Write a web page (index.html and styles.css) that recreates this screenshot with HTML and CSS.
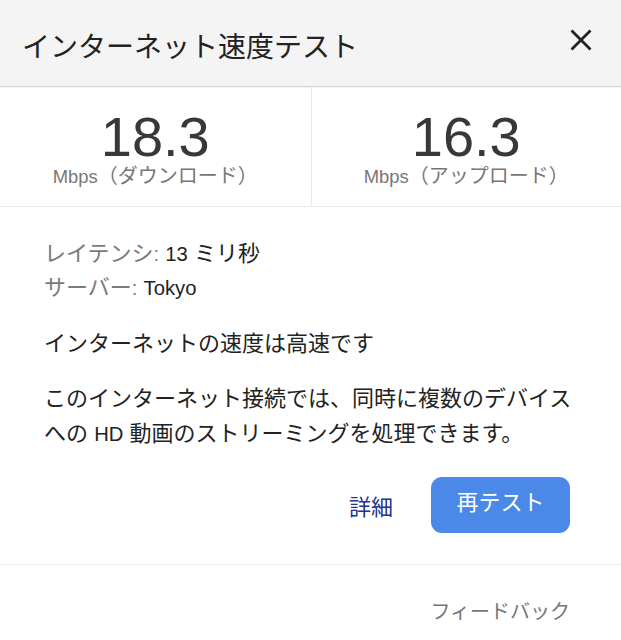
FILE: index.html
```html
<!DOCTYPE html>
<html lang="ja">
<head>
<meta charset="utf-8">
<title>インターネット速度テスト</title>
<link rel="stylesheet" href="styles.css">
</head>
<body>
<div class="card">
  <header class="head">
    <h1 class="title">インターネット速度テスト</h1>
    <button class="close" aria-label="閉じる">
      <svg width="22" height="22" viewBox="0 0 22 22"><path d="M1.5 1.5 L20.5 20.5 M20.5 1.5 L1.5 20.5" stroke="#222" stroke-width="2.8" fill="none"/></svg>
    </button>
  </header>
  <section class="stats">
    <div class="stat">
      <div class="num">18.3</div>
      <div class="unit"><span class="lat">Mbps</span>（ダウンロード）</div>
    </div>
    <div class="stat">
      <div class="num">16.3</div>
      <div class="unit"><span class="lat">Mbps</span>（アップロード）</div>
    </div>
  </section>
  <section class="body">
    <div class="info">
      <div><span class="key">レイテンシ<span class="lat">:</span></span> <span class="lat">13</span> ミリ秒</div>
      <div><span class="key">サーバー<span class="lat">:</span></span> <span class="lat">Tokyo</span></div>
    </div>
    <p class="verdict">インターネットの速度は高速です</p>
    <p class="desc">このインターネット接続では、同時に複数のデバイス<br>への <span class="lat">HD</span> 動画のストリーミングを処理できます。</p>
    <div class="actions">
      <button class="link">詳細</button>
      <button class="primary">再テスト</button>
    </div>
  </section>
  <footer class="foot">
    <span class="feedback">フィードバック</span>
  </footer>
</div>
</body>
</html>
```

FILE: styles.css
```css
html, body {
  margin: 0;
  padding: 0;
  background: #fff;
}
body {
  font-family: "Liberation Sans", "Noto Sans CJK JP", sans-serif;
  color: #222;
}
.lat {
  font-size: 0.92em;
}
.head {
  height: 87px;
  box-sizing: border-box;
  background: #f4f4f4;
  border-bottom: 1px solid #d4d4d4;
  box-shadow: 0 1px 1px rgba(0,0,0,0.04);
  display: flex;
  align-items: center;
  justify-content: space-between;
  padding: 10px 29px 0 22px;
}
.title {
  margin: 0;
  font-size: 28px;
  font-weight: normal;
  line-height: 36px;
  color: #222;
}
.close {
  border: 0;
  background: none;
  padding: 0;
  width: 22px;
  height: 22px;
  margin-top: -16px;
  display: block;
}
.close svg { display: block; }
.stats {
  display: grid;
  grid-template-columns: 1fr 1fr;
  border-bottom: 1px solid #e8e8e8;
  height: 120px;
  box-sizing: border-box;
}
.stat {
  text-align: center;
  padding-top: 22px;
}
.stat + .stat {
  border-left: 1px solid #e8e8e8;
}
.num {
  font-size: 56px;
  line-height: 56px;
  color: #383838;
}
.unit {
  font-size: 20px;
  line-height: 24px;
  color: #777;
  margin-top: -1px;
}
.body {
  padding: 30px 44px 0 44px;
  font-size: 22px;
}
.info {
  line-height: 33px;
}
.key {
  color: #7a7a7a;
}
.verdict {
  margin: 22px 0 0 0;
  line-height: 33px;
}
.desc {
  margin: 21px 0 0 0;
  line-height: 35px;
}
.actions {
  display: flex;
  justify-content: flex-end;
  align-items: center;
  gap: 38px;
  margin: 25px -44px 0 -44px;
  padding: 0 51px 31px 0;
  border-bottom: 1px solid #ececec;
}
.link {
  border: 0;
  background: none;
  padding: 0;
  font: inherit;
  font-size: 22px;
  color: #25318a;
}
.primary {
  border: 0;
  background: #4a89e8;
  color: #fff;
  font: inherit;
  font-size: 22px;
  line-height: 50px;
  width: 139px;
  height: 56px;
  border-radius: 11px;
  padding: 0 0 4px 0;
}
.foot {
  display: flex;
  justify-content: flex-end;
  padding: 35px 51px 0 0;
}
.feedback {
  font-size: 20px;
  line-height: 24px;
  color: #777;
}
```
